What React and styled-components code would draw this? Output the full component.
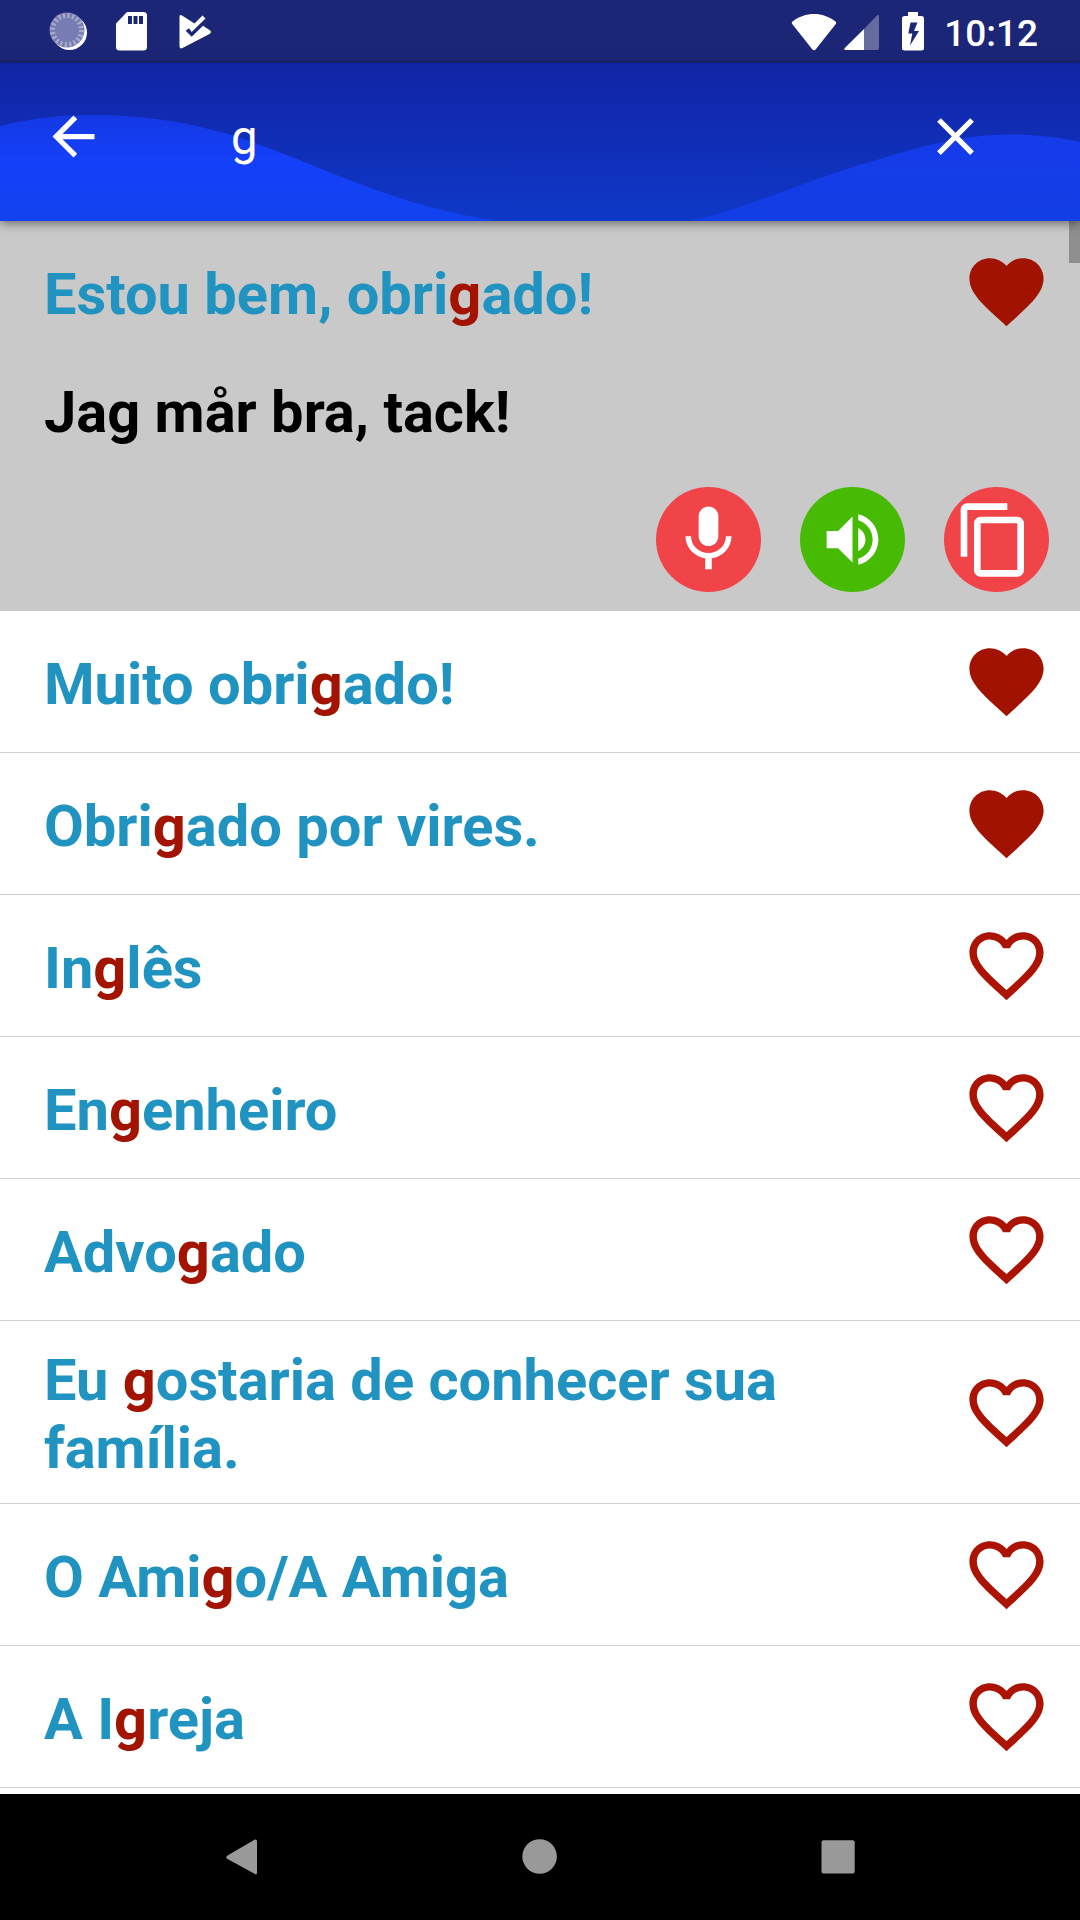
import React from 'react'
import styled, { createGlobalStyle } from 'styled-components'

const GlobalStyle = createGlobalStyle`
  * {
    box-sizing: border-box;
  }
  body {
    margin: 0;
    background: #fff;
    font-family: Roboto, 'Liberation Sans', sans-serif;
  }
  svg {
    display: block;
    flex: none;
  }
`;

const Screen = styled.div`
  display: flex;
  flex-direction: column;
  width: 1080px;
  height: 1920px;
  overflow: hidden;
  background: #fff;
`;

const StatusBar = styled.header`
  display: flex;
  flex: none;
  align-items: center;
  justify-content: space-between;
  height: 63px;
  padding: 0 42px 0 49px;
  background: #1c2677;
`;

const StatusGroup = styled.div`
  display: flex;
  align-items: center;
  gap: ${({ $gap }) => $gap}px;
`;

const BatteryIcon = styled.svg`
  margin-left: 15px;
`;

const Clock = styled.span`
  margin-left: 13px;
  padding-top: 3px;
  color: #fff;
  font-size: 37px;
  font-weight: 500;
  line-height: 43px;
`;

const AppBar = styled.div`
  position: relative;
  z-index: 1;
  display: flex;
  flex: none;
  align-items: center;
  height: 158px;
  padding: 0 93px 12px 42px;
  background: linear-gradient(#1124a5, #0f38c8);
  box-shadow: 0 2px 10px rgba(0, 0, 0, 0.5);
`;

const Waves = styled.svg`
  position: absolute;
  top: 0;
  left: 0;
`;

const BarButton = styled.button`
  position: relative;
  padding: 0;
  border: 0;
  background: none;
`;

const Query = styled.div`
  position: relative;
  flex: 1;
  padding: 3px 0 0 126px;
  color: #fff;
  font-size: 47.25px;
  line-height: 56px;
`;

const List = styled.main`
  position: relative;
  flex: 1;
  min-height: 0;
  overflow: hidden;
`;

const ScrollThumb = styled.div`
  position: absolute;
  top: 0;
  right: 0;
  width: 11px;
  height: 42px;
  background: #8f8f8f;
`;

const Expanded = styled.section`
  height: 390px;
  background: #c9c9c9;
`;

const Row = styled.div`
  display: flex;
  align-items: center;
  justify-content: space-between;
  min-height: ${({ $divided }) => ($divided ? 142 : 141)}px;
  padding: 23px 29px 23px 44px;
  border-bottom: ${({ $divided }) => ($divided ? '1px solid #d2d2d2' : '0')};

  svg {
    margin: -20px 0;
  }
`;

const Phrase = styled.p`
  width: 800px;
  margin: 0 0 -2px;
  padding-top: 2px;
  color: #2193c0;
  font-size: 57.8px;
  font-weight: 700;
  line-height: 68px;
`;

const Match = styled.span`
  color: #a31400;
`;

const Translation = styled(Phrase)`
  margin: 0;
  padding: 16px 0 0 44px;
  color: #000;
`;

const Actions = styled.div`
  display: flex;
  justify-content: flex-end;
  gap: 39px;
  padding: 41px 31px 0 0;
`;

const RoundButton = styled.button`
  display: flex;
  align-items: center;
  justify-content: center;
  width: 105px;
  height: 105px;
  padding: 0 ${({ $shift }) => $shift || 0}px 0 0;
  border: 0;
  border-radius: 50%;
  background: ${({ $color }) => $color};
`;

const NavBar = styled.nav`
  display: flex;
  flex: none;
  align-items: center;
  justify-content: center;
  gap: 250px;
  height: 126px;
  background: #000;
`;

const paths = {
  back: 'M20 11H7.83l5.59-5.59L12 4l-8 8 8 8 1.41-1.41L7.83 13H20v-2z',
  close: 'M19 6.41L17.59 5 12 10.59 6.41 5 5 6.41 10.59 12 5 17.59 6.41 19 12 13.41 17.59 19 19 17.59 13.41 12z',
  mic: 'M12 14c1.66 0 2.99-1.34 2.99-3L15 5c0-1.66-1.34-3-3-3S9 3.34 9 5v6c0 1.66 1.34 3 3 3zm5.3-3c0 3-2.54 5.1-5.3 5.1S6.7 14 6.7 11H5c0 3.41 2.72 6.23 6 6.72V21h2v-3.28c3.28-.48 6-3.3 6-6.72h-1.7z',
  volume: 'M3 9v6h4l5 5V4L7 9H3zm13.5 3c0-1.77-1.02-3.29-2.5-4.03v8.05c1.48-.73 2.5-2.25 2.5-4.02zM14 3.23v2.06c2.89.86 5 3.54 5 6.71s-2.11 5.85-5 6.71v2.06c4.01-.91 7-4.49 7-8.77s-2.99-7.86-7-8.77z',
  copy: 'M16 1H4c-1.1 0-2 .9-2 2v14h2V3h12V1zm3 4H8c-1.1 0-2 .9-2 2v14c0 1.1.9 2 2 2h11c1.1 0 2-.9 2-2V7c0-1.1-.9-2-2-2zm0 16H8V7h11v14z',
  heart: 'M12 21.35l-1.45-1.32C5.4 15.36 2 12.28 2 8.5 2 5.42 4.42 3 7.5 3c1.74 0 3.41.81 4.5 2.09C13.09 3.81 14.76 3 16.5 3 19.58 3 22 5.42 22 8.5c0 3.78-3.4 6.86-8.55 11.54L12 21.35z',
  heartOutline: 'M16.5 3c-1.74 0-3.41.81-4.5 2.09C10.91 3.81 9.24 3 7.5 3 4.42 3 2 5.42 2 8.5c0 3.78 3.4 6.86 8.55 11.54L12 21.35l1.45-1.32C18.6 15.36 22 12.28 22 8.5 22 5.42 19.58 3 16.5 3zm-4.4 15.55l-.1.1-.1-.1C7.14 14.24 4 11.39 4 8.5 4 6.5 5.5 5 7.5 5c1.54 0 3.04.99 3.57 2.36h1.87C13.46 5.99 14.96 5 16.5 5c2 0 3.5 1.5 3.5 3.5 0 2.89-3.14 5.74-7.9 10.05z',
}

const Icon = ({ name, size, color = '#fff' }) => (
  <svg width={size} height={size} viewBox="0 0 24 24" fill={color}>
    <path d={paths[name]} />
  </svg>
)

const Heart = ({ filled }) => (
  <Icon name={filled ? 'heart' : 'heartOutline'} size={89} color={filled ? '#a11300' : '#ab1403'} />
)

// [before, matched letter, after]
const rows = [
  { text: ['Muito obri', 'g', 'ado!'], filled: true },
  { text: ['Obri', 'g', 'ado por vires.'], filled: true },
  { text: ['In', 'g', 'lês'] },
  { text: ['En', 'g', 'enheiro'] },
  { text: ['Advo', 'g', 'ado'] },
  { text: ['Eu ', 'g', 'ostaria de conhecer sua família.'] },
  { text: ['O Ami', 'g', 'o/A Amiga'] },
  { text: ['A I', 'g', 'reja'] },
]

const Highlighted = ({ text }) => (
  <Phrase>{text[0]}<Match>{text[1]}</Match>{text[2]}</Phrase>
)

const StatusIcons = () => (
  <StatusBar>
    <StatusGroup $gap={28}>
      <svg width="39" height="40" viewBox="0 0 39 40">
        <circle cx="20.5" cy="20.5" r="17.5" fill="#fff" />
        <circle cx="18" cy="18" r="17.5" fill="#777cb2" />
        <circle cx="18" cy="18" r="14.5" fill="none" stroke="#a9abcb" strokeWidth="5" strokeDasharray="2.2 2.355" />
      </svg>
      <svg width="31" height="39" viewBox="0 0 31 39">
        <path fill="#fff" fillRule="evenodd" d="M11 0h16.500q3.500 0 3.500 3.500v31.500q0 3.500-3.500 3.500h-24q-3.500 0-3.500-3.500V11.500zM12 4v8h4V4zm5.500 0v8h4V4zm5.500 0v8h4V4z" />
      </svg>
      <svg width="41" height="36" viewBox="-4 0 41 36">
        <path fill="#fff" d="M.5 2Q1 .3 3 1.500L15.500 9.500l8-8 3 3L12.700 18 10 14.300l-3.300 2.400 6 6L24 11.700l6.500 4.300q3 2 0 4L3.500 34Q.5 35.500.5 32z" />
      </svg>
    </StatusGroup>
    <StatusGroup $gap={7}>
      <svg width="46" height="38" viewBox="0 0 46 38">
        <path fill="#fff" d="M1.500 8.500C14-1.500 32-1.500 44.500 8.500q1.300 1 .3 2.400L25 36q-2 2.500-4 0L1.200 10.900Q.2 9.500 1.500 8.500z" />
      </svg>
      <svg width="36" height="38" viewBox="0 0 36 38">
        <path fill="#666b9f" d="M20 16L33 2.500q2-1.500 2 1V35q0 2-2 2H20z" />
        <path fill="#fff" d="M20 16v21H1.500Q-.5 37 .8 35z" />
      </svg>
      <BatteryIcon width="22" height="39" viewBox="0 0 22 39">
        <path fill="#fff" fillRule="evenodd" d="M6 0h10v4h3.500Q22 4 22 6.500V36q0 2.500-2.500 2.500h-17Q0 38.500 0 36V6.500Q0 4 2.500 4H6zM8.500 10.500L6.300 21.500h4L8 33.500 17 19h-5l3.500-8.500z" />
      </BatteryIcon>
      <Clock>10:12</Clock>
    </StatusGroup>
  </StatusBar>
)

const SearchBar = () => (
  <AppBar>
    <Waves width="1080" height="158" viewBox="0 0 1080 158">
      <defs>
        <linearGradient id="wave" x1="0" y1="50" x2="0" y2="158" gradientUnits="userSpaceOnUse">
          <stop offset="0" stopColor="#1438e2" />
          <stop offset="0.45" stopColor="#1540fa" />
          <stop offset="1" stopColor="#1142ee" />
        </linearGradient>
        <linearGradient id="waveRight" x1="0" y1="70" x2="0" y2="158" gradientUnits="userSpaceOnUse">
          <stop offset="0" stopColor="#163bea" />
          <stop offset="1" stopColor="#123ee4" />
        </linearGradient>
      </defs>
      <path fill="url(#wave)" d="M0 63C32 55 62 52 93 52c44 0 82 5 124 16 84 23 170 76 283 90H0z" />
      <path fill="url(#waveRight)" d="M690 158c60-13 120-43 190-62 64-20 120-34 200-17v79z" />
    </Waves>
    <BarButton aria-label="Back">
      <Icon name="back" size={63} />
    </BarButton>
    <Query>g</Query>
    <BarButton aria-label="Clear">
      <Icon name="close" size={63} />
    </BarButton>
  </AppBar>
)

const App = () => (
  <>
    <GlobalStyle />
    <Screen>
      <StatusIcons />
      <SearchBar />

      <List>
        <Expanded>
          <Row>
            <Highlighted text={['Estou bem, obri', 'g', 'ado!']} />
            <Heart filled />
          </Row>
          <Translation>Jag mår bra, tack!</Translation>
          <Actions>
            <RoundButton $color="#f04448" aria-label="Record">
              <Icon name="mic" size={79} />
            </RoundButton>
            <RoundButton $color="#47ba04" aria-label="Listen">
              <Icon name="volume" size={69} />
            </RoundButton>
            <RoundButton $color="#f04448" $shift={5} aria-label="Copy">
              <Icon name="copy" size={80} />
            </RoundButton>
          </Actions>
        </Expanded>

        {rows.map(({ text, filled }) => (
          <Row key={text.join('')} $divided>
            <Highlighted text={text} />
            <Heart filled={filled} />
          </Row>
        ))}
        <ScrollThumb />
      </List>

      <NavBar>
        <svg width="48" height="48" viewBox="0 0 48 48" fill="#999">
          <path d="M39 8.500v31q0 3-2.500 1.200L9.500 26q-2.500-1.500 0-3.500L36.500 6.800Q39 5.500 39 8.500z" />
        </svg>
        <svg width="48" height="48" viewBox="0 0 48 48" fill="#999">
          <circle cx="23.600" cy="23.500" r="17.300" />
        </svg>
        <svg width="48" height="48" viewBox="0 0 48 48" fill="#999">
          <rect x="7.500" y="7.300" width="33.200" height="33.200" rx="2" />
        </svg>
      </NavBar>
    </Screen>
  </>
)

export default App
